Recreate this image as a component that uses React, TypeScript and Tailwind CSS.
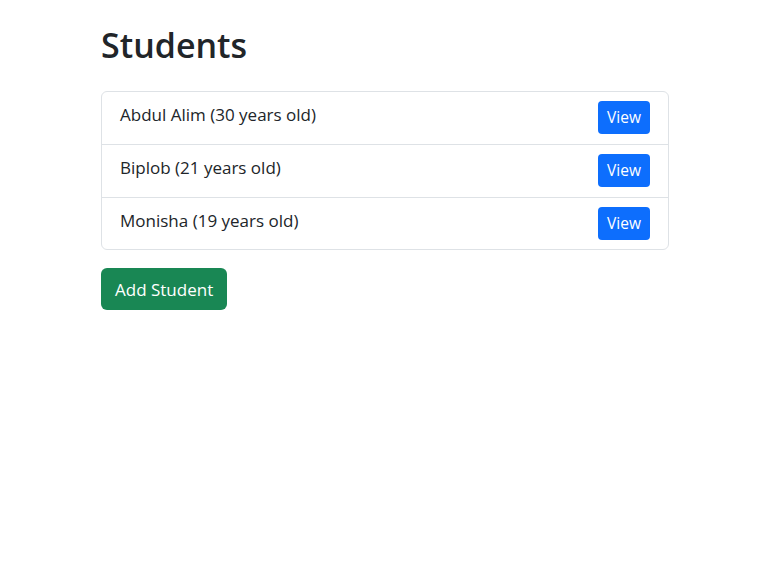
const students = [
  { name: "Abdul Alim", age: 30 },
  { name: "Biplob", age: 21 },
  { name: "Monisha", age: 19 },
];

export default function App() {
  return (
    <div className="min-h-screen bg-white text-[#212529] font-['Open_Sans',sans-serif]">
      <div className="ml-[101px] w-[568px] pt-[24px]">
        <h2 className="text-[34px] leading-[42px] font-semibold mb-[25px]">Students</h2>

        <ul className="border border-[#dee2e6] rounded-[6px]">
          {students.map((s, i) => (
            <li
              key={s.name}
              className={`flex items-center justify-between px-[18px] py-[9.4px] ${
                i > 0 ? "border-t border-[#dee2e6]" : ""
              }`}
            >
              <span className="text-[17px] leading-[26px] pb-[5px]">
                {s.name} ({s.age} years old)
              </span>
              <button className="w-[52px] h-[33px] rounded-[4px] bg-[#0d6efd] text-white text-[15.5px]">
                View
              </button>
            </li>
          ))}
        </ul>

        <button className="mt-[18px] h-[42px] px-[14px] rounded-[6px] bg-[#198754] text-white text-[17px]">
          Add Student
        </button>
      </div>
    </div>
  );
}
